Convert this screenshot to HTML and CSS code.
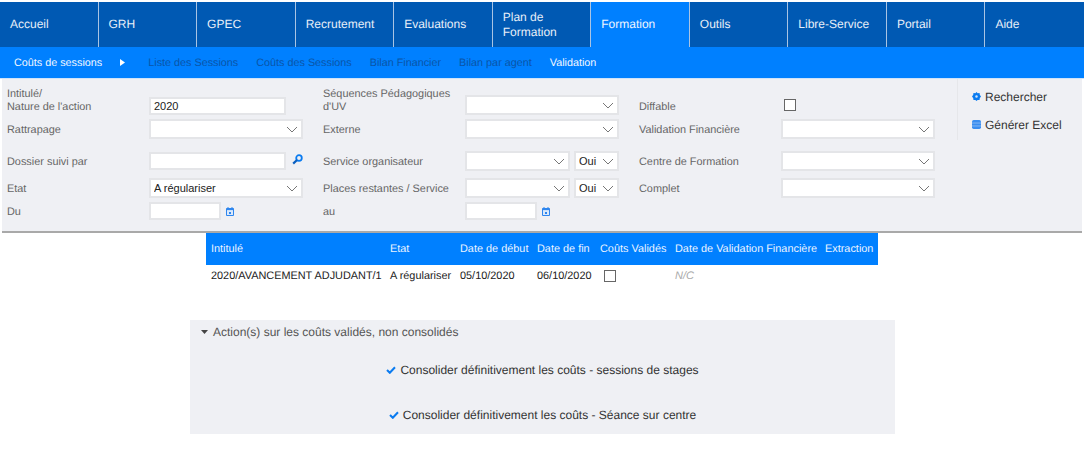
FILE: index.html
```html
<!DOCTYPE html>
<html lang="fr">
<head>
<meta charset="utf-8">
<title>Coûts de sessions</title>
<link rel="stylesheet" href="styles.css">
</head>
<body>
<div class="page">
  <nav class="menu">
    <a class="tab">Accueil</a>
    <a class="tab">GRH</a>
    <a class="tab">GPEC</a>
    <a class="tab">Recrutement</a>
    <a class="tab">Evaluations</a>
    <a class="tab">Plan de Formation</a>
    <a class="tab active">Formation</a>
    <a class="tab">Outils</a>
    <a class="tab">Libre-Service</a>
    <a class="tab">Portail</a>
    <a class="tab">Aide</a>
  </nav>
  <nav class="submenu">
    <span class="sub current">Coûts de sessions</span>
    <svg class="sub-arrow" width="5" height="7" viewBox="0 0 5 7"><path d="M0 0l5 3.5L0 7z" fill="#fff"/></svg>
    <a class="sub">Liste des Sessions</a>
    <a class="sub">Coûts des Sessions</a>
    <a class="sub">Bilan Financier</a>
    <a class="sub">Bilan par agent</a>
    <a class="sub current">Validation</a>
  </nav>
  <section class="panel">
    <form class="filters">
      <label class="lab lab-end">Intitulé/<br>Nature de l'action</label>
      <div class="cell cell-end"><input class="inp inp-wide" value="2020"></div>
      <label class="lab lab-end">Séquences Pédagogiques d'UV</label>
      <div class="cell cell-end"><select class="sel"><option></option></select></div>
      <label class="lab lab-end">Diffable</label>
      <div class="cell cell-end"><span class="check"></span></div>

      <label class="lab">Rattrapage</label>
      <div class="cell"><select class="sel"><option></option></select></div>
      <label class="lab">Externe</label>
      <div class="cell"><select class="sel"><option></option></select></div>
      <label class="lab">Validation Financière</label>
      <div class="cell"><select class="sel"><option></option></select></div>

      <label class="lab lab-low">Dossier suivi par</label>
      <div class="cell low">
        <input class="inp inp-wide">
        <svg class="ico-search" width="11" height="11" viewBox="0 0 11 11"><circle cx="7" cy="4" r="2.8" fill="none" stroke="#0a7bf0" stroke-width="1.8"/><path d="M5 6L1.2 9.6" stroke="#0a5fc0" stroke-width="2.2"/></svg>
      </div>
      <label class="lab lab-low">Service organisateur</label>
      <div class="cell pair low"><select class="sel"><option></option></select><select class="sel sel-oui"><option>Oui</option></select></div>
      <label class="lab lab-low">Centre de Formation</label>
      <div class="cell low"><select class="sel"><option></option></select></div>

      <label class="lab">Etat</label>
      <div class="cell"><select class="sel"><option>A régulariser</option></select></div>
      <label class="lab">Places restantes / Service</label>
      <div class="cell pair"><select class="sel"><option></option></select><select class="sel sel-oui"><option>Oui</option></select></div>
      <label class="lab">Complet</label>
      <div class="cell"><select class="sel"><option></option></select></div>

      <label class="lab">Du</label>
      <div class="cell">
        <input class="inp inp-date">
        <svg class="ico-cal" width="8" height="9" viewBox="0 0 8 9"><path d="M.5 1.5h7v7h-7z" fill="#dbe9fb" stroke="#2f86ee"/><path d="M.5 1.5h7v1.6h-7z" fill="#2f86ee"/><path d="M2 0v2M6 0v2" stroke="#2f86ee"/><path d="M3 5h2v2H3z" fill="#2f86ee"/></svg>
      </div>
      <label class="lab">au</label>
      <div class="cell">
        <input class="inp inp-date">
        <svg class="ico-cal" width="8" height="9" viewBox="0 0 8 9"><path d="M.5 1.5h7v7h-7z" fill="#dbe9fb" stroke="#2f86ee"/><path d="M.5 1.5h7v1.6h-7z" fill="#2f86ee"/><path d="M2 0v2M6 0v2" stroke="#2f86ee"/><path d="M3 5h2v2H3z" fill="#2f86ee"/></svg>
      </div>
      <span class="lab"></span>
      <span class="cell"></span>
    </form>
    <aside class="actions">
      <a class="act">
        <svg width="9" height="9" viewBox="0 0 8 8"><path d="M4 0l1 1 1.7-.2.2 1.7 1.1 1.5-1.1 1.5-.2 1.7L5 7l-1 1-1-1-1.700.2-.2-1.700L0 4l1.100-1.500.2-1.700L3 1z" fill="#0a7bf0"/><circle cx="4" cy="4" r="1.100" fill="#cfe4fb"/></svg>
        Rechercher
      </a>
      <a class="act">
        <svg width="9" height="9" viewBox="0 0 8 8"><rect width="8" height="8" rx="1.500" fill="#3a8ef0"/><path d="M0 2.700h8M0 5.300h8" stroke="#bcd8f8" stroke-width=".5"/></svg>
        Générer Excel
      </a>
    </aside>
  </section>
  <table class="grid">
    <colgroup>
      <col class="c1"><col class="c2"><col class="c3"><col class="c4"><col class="c5"><col class="c6"><col class="c7">
    </colgroup>
    <thead>
      <tr><th>Intitulé</th><th>Etat</th><th>Date de début</th><th>Date de fin</th><th>Coûts Validés</th><th>Date de Validation Financière</th><th>Extraction</th></tr>
    </thead>
    <tbody>
      <tr><td>2020/AVANCEMENT ADJUDANT/1</td><td>A régulariser</td><td>05/10/2020</td><td>06/10/2020</td><td><span class="check check-row"></span></td><td class="nc">N/C</td><td></td></tr>
    </tbody>
  </table>
  <section class="box">
    <h2 class="box-title">
      <svg width="7" height="4" viewBox="0 0 7 4"><path d="M0 0h7L3.500 4z" fill="#444"/></svg>
      Action(s) sur les coûts validés, non consolidés
    </h2>
    <div class="box-row box-row-first">
      <svg width="10" height="8" viewBox="0 0 10 8"><path d="M1 4l2.800 2.800L9 1.200" fill="none" stroke="#0a7bf0" stroke-width="2"/></svg>
      Consolider définitivement les coûts - sessions de stages
    </div>
    <div class="box-row">
      <svg width="10" height="8" viewBox="0 0 10 8"><path d="M1 4l2.800 2.800L9 1.200" fill="none" stroke="#0a7bf0" stroke-width="2"/></svg>
      Consolider définitivement les coûts - Séance sur centre
    </div>
  </section>
</div>
</body>
</html>
```
FILE: styles.css
```css
* { box-sizing: border-box; }
html, body { margin: 0; padding: 0; background: #fff; }
body {
  font-family: "Liberation Sans", Arial, sans-serif;
  font-size: 12px;
  color: #222;
  height: 459px;
  overflow: hidden;
  text-rendering: geometricPrecision;
}
.page { width: 1084px; padding-top: 2px; }

.menu { display: grid; grid-template-columns: repeat(11, 1fr); height: 45px; background: #0059b3; }
.tab {
  display: flex;
  align-items: center;
  padding: 0 10px;
  color: #e8eff8;
  font-size: 12px;
  line-height: 15px;
  border-right: 1px solid #a9c4e4;
}
.tab:last-child { border-right: 0; }
.tab.active { background: #0080ff; color: #eef5ff; }

.submenu { display: flex; align-items: center; height: 32px; padding-left: 14px; background: #0080ff; border-bottom: 1px solid #cfe3fa; }
.sub { color: #0a55a8; margin-right: 18px; font-size: 10.800px; }
.sub.current { color: #f2f7ff; }
.sub-arrow { margin: 0 23px 0 0; }

.panel {
  display: flex;
  height: 154px;
  margin-left: 2px;
  width: 1080px;
  background: #eff0f4;
  border-bottom: 2px solid #a9a9a9;
}
.filters {
  width: 955px;
  padding: 7px 0 0 5px;
  display: grid;
  grid-template-columns: 142px 174px 142px 174px 142px 176px;
  grid-template-rows: 30px 26px 36px 20px 26px;
  align-items: center;
}
.lab { color: #666; font-size: 10.900px; line-height: 13px; padding-top: 2px; }
.lab-end { align-self: end; padding-top: 0; padding-bottom: 2px; padding-right: 10px; }
.lab-low { padding-top: 4px; }
.cell { display: flex; align-items: center; gap: 4px; }
.cell-end { align-self: end; padding-bottom: 1px; }
.low { padding-top: 2px; }
.pair { gap: 4px; }
.inp, .sel {
  height: 20px;
  border: 2px solid #e4e5e8;
  background: #fff;
  font: 11px "Liberation Sans", Arial, sans-serif;
  color: #222;
  padding: 0 3px;
  border-radius: 0;
  outline: 0;
}
.inp { height: 18px; }
.inp-wide { width: 137px; }
.inp-date { width: 72px; }
.sel {
  width: 154px;
  appearance: none;
  -webkit-appearance: none;
  background-image: linear-gradient(45deg, transparent 46%, #777 46%, #777 58%, transparent 58%), linear-gradient(-45deg, transparent 46%, #777 46%, #777 58%, transparent 58%);
  background-size: 5px 5px, 5px 5px;
  background-position: right 9px center, right 4px center;
  background-repeat: no-repeat;
}
.pair .sel { width: 105px; }
.pair .sel-oui { width: 45px; }
.check { display: block; width: 12px; height: 12px; margin: 0 0 4px 3px; background: #fff; border: 1px solid #666; }
.check-row { margin: 0 0 0 4px; }
.ico-search { margin-left: 2px; margin-bottom: 4px; }
.ico-cal { margin-left: 1px; }

.actions { flex: 1; height: 61px; padding: 10px 0 0 14px; border-left: 1px solid #e6e7ea; display: flex; flex-direction: column; gap: 13px; }
.act { display: flex; align-items: center; gap: 4px; font-size: 12px; height: 15px; color: #333; }

.grid { table-layout: fixed; width: 672px; margin-left: 206px; border-collapse: collapse; }
.c1 { width: 179px; } .c2 { width: 70px; } .c3 { width: 77px; } .c4 { width: 63px; }
.c5 { width: 75px; } .c6 { width: 150px; } .c7 { width: 58px; }
.grid th { height: 32px; background: #0080ff; color: #eaf3ff; font-weight: normal; text-align: left; padding: 0 5px; font-size: 10.900px; white-space: nowrap; }
.grid td { height: 22px; padding: 0 5px; font-size: 10.900px; color: #222; white-space: nowrap; }
.grid .nc { color: #aaa; font-style: italic; font-size: 11px; }

.box { width: 705px; height: 114px; margin: 33px 0 0 190px; background: #eff0f4; }
.box-title { margin: 0; padding: 5px 0 0 11px; font-size: 12px; line-height: 14px; font-weight: normal; color: #555; display: flex; align-items: center; gap: 5px; }
.box-row { display: flex; justify-content: center; align-items: center; gap: 4px; height: 16px; font-size: 12px; color: #333; margin-top: 29px; }
.box-row-first { margin-top: 23px; }
```
